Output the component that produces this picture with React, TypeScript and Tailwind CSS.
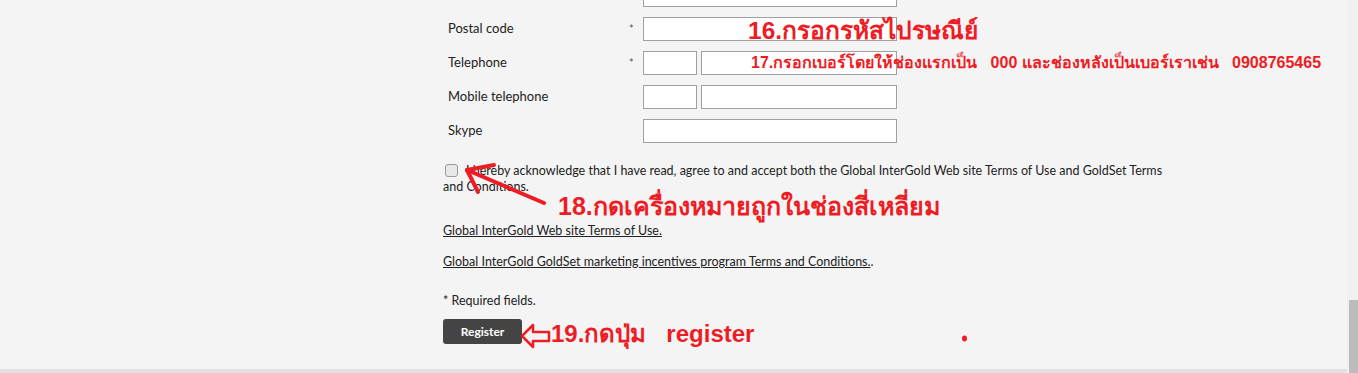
import React from "react";

const labelFont = { fontFamily: "Lato, 'Open Sans', sans-serif" };

function Row({ label, required, split }: { label: string; required?: boolean; split?: boolean }) {
  return (
    <div className="flex items-center h-[34px]">
      <div className="w-[186px] pl-[5px] text-[13px] text-[#222]">{label}</div>
      <div className="w-[14px] text-[11px] text-[#555]">{required ? "*" : ""}</div>
      {split ? (
        <div className="flex gap-[4px]">
          <div className="w-[54px] h-[24px] bg-white border border-[#a0a0a0]" />
          <div className="w-[196px] h-[24px] bg-white border border-[#a0a0a0]" />
        </div>
      ) : (
        <div className="w-[254px] h-[24px] bg-white border border-[#a0a0a0]" />
      )}
    </div>
  );
}

export default function App() {
  const red = "text-[#ee1c24]";
  const thai = { fontFamily: "'Liberation Sans', 'DejaVu Sans', 'Noto Sans', sans-serif" };
  return (
    <div className="w-[1358px] h-[373px] bg-[#f4f4f4] overflow-hidden relative flex" style={labelFont}>
      <div className="flex-1 flex flex-col">
        <div className="flex-1 relative">
          <div className="ml-[443px] w-[725px] -mt-[22px] text-[#222]">
            <Row label="" />
            <Row label="Postal code" required />
            <Row label="Telephone" required split />
            <Row label="Mobile telephone" split />
            <Row label="Skype" />
            <div className="mt-[15px] text-[12.5px] leading-[16px]">
              <span className="inline-block w-[13px] h-[13px] rounded-[3px] border border-[#999] bg-[#e8e8e8] align-[-2px] ml-[2px] mr-[8px]" />
              I hereby acknowledge that I have read, agree to and accept both the Global InterGold Web site Terms of Use and GoldSet Terms and Conditions.
            </div>
            <div className="mt-[27px] text-[12.5px] underline">Global InterGold Web site Terms of Use.</div>
            <div className="mt-[12px] text-[12.5px]"><span className="underline">Global InterGold GoldSet marketing incentives program Terms and Conditions.</span>.</div>
            <div className="mt-[20px] text-[12.5px]">* Required fields.</div>
            <button className="mt-[9px] w-[79px] h-[25px] rounded-[3px] bg-[#444] text-white text-[12px] font-bold">Register</button>
          </div>

          <div className={`absolute left-[748px] top-[19px] text-[24.5px] font-bold leading-none ${red}`} style={thai}>16.กรอกรหัสไปรษณีย์</div>
          <div className={`absolute left-[751px] top-[55px] text-[16px] font-bold leading-none whitespace-pre ${red}`} style={thai}>17.กรอกเบอร์โดยให้ช่องแรกเป็น   000 และช่องหลังเป็นเบอร์เราเช่น   0908765465</div>
          <div className={`absolute left-[558px] top-[194px] text-[25px] font-bold leading-none ${red}`} style={thai}>18.กดเครื่องหมายถูกในช่องสี่เหลี่ยม</div>
          <div className={`absolute left-[551px] top-[322px] text-[24px] font-bold leading-none whitespace-pre ${red}`} style={thai}>19.กดปุ่ม   register</div>

          <svg className="absolute left-0 top-0" width="1347" height="369" viewBox="0 0 1347 369">
            <g stroke="#ee1c24" strokeWidth="4" strokeLinecap="round" fill="none">
              <line x1="544" y1="203" x2="467" y2="170" />
              <line x1="467" y1="170" x2="494" y2="165" />
              <line x1="467" y1="170" x2="478" y2="192" />
            </g>
            <path d="M522 336 L533 325 L533 332 L549 332 L549 341 L533 341 L533 347 Z" fill="none" stroke="#ee1c24" strokeWidth="2.5" strokeLinejoin="round" />
            <ellipse cx="964.5" cy="338.5" rx="2.5" ry="3" fill="#ee1c24" />
          </svg>
        </div>
        <div className="h-[4px] bg-[#e2e2e2]" />
      </div>
      <div className="w-[11px] bg-[#f0f0f0] flex flex-col justify-end">
        <div className="ml-[2px] h-[73px] bg-[#bcbcbc]" />
      </div>
    </div>
  );
}
